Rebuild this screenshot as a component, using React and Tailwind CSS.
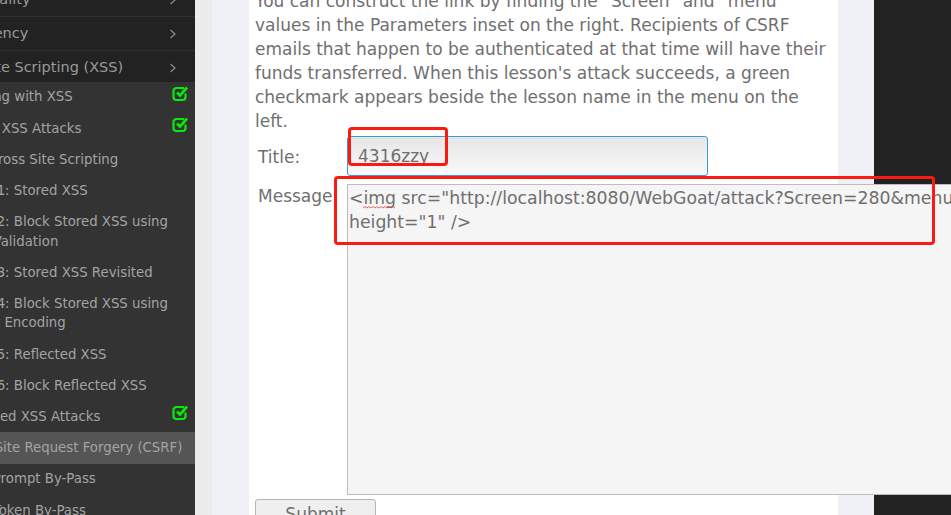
const font = { fontFamily: '"DejaVu Sans", sans-serif' };

const CheckIcon = () => (
  <svg width="17" height="17" viewBox="0 0 17 17" fill="none" className="shrink-0">
    <path d="M13.5 8.5v3.5a3 3 0 0 1-3 3H4.5a3 3 0 0 1-3-3V6a3 3 0 0 1 3-3H12" stroke="#0be80b" strokeWidth="2.2" />
    <path d="M5 7.5l3 3 7-8" stroke="#0be80b" strokeWidth="2.8" />
  </svg>
);

const Chevron = () => (
  <svg width="8" height="10" viewBox="0 0 8 10" fill="none" className="shrink-0">
    <path d="M1.5 1l4.5 4-4.5 4" stroke="#8c8c8c" strokeWidth="1.2" />
  </svg>
);

const categories = ["Code Quality", "Concurrency", "Cross-Site Scripting (XSS)"];

const lessons = [
  { text: "Phishing with XSS", done: true },
  { text: "Stored XSS Attacks", done: true },
  { text: "LAB: Cross Site Scripting" },
  { text: "Stage 1: Stored XSS" },
  { text: "Stage 2: Block Stored XSS using Input Validation" },
  { text: "Stage 3: Stored XSS Revisited" },
  { text: "Stage 4: Block Stored XSS using Output Encoding" },
  { text: "Stage 5: Reflected XSS" },
  { text: "Stage 6: Block Reflected XSS" },
  { text: "Reflected XSS Attacks", done: true },
  { text: "Cross Site Request Forgery (CSRF)", active: true },
  { text: "CSRF Prompt By-Pass" },
  { text: "CSRF Token By-Pass" },
];

const Sidebar = () => (
  <aside className="w-[195px] shrink-0 bg-[#333] overflow-hidden">
    <div className="-mt-[17.5px]">
      {categories.map((c) => (
        <div key={c} className="h-[34px] pt-[2px] bg-[#222] border-b border-[#2e2e2e] flex items-center pr-[18px] text-[14.5px] text-[#9a9a9a] whitespace-nowrap">
          <span className="-ml-[63px]">{c}</span>
          <div className="ml-auto"><Chevron /></div>
        </div>
      ))}
      <div className="relative -mt-[3px] bg-[#333]">
        {lessons.map((l) => (
          <div key={l.text} className={`relative py-[5.85px] pr-[10px] text-[13.3px] leading-[19.5px] text-[#a3a3a3] ${l.active ? "bg-[#555]" : ""}`}>
            <div className="-ml-[46px]">{l.text}</div>
            {l.done && <div className="absolute right-[6px] top-[3px]"><CheckIcon /></div>}
          </div>
        ))}
      </div>
    </div>
  </aside>
);

const LessonForm = () => (
  <main className="w-[589px] shrink-0 bg-white px-[6px] -mt-[11px]">
    <p className="text-[17px] leading-[24.1px] text-[#6f6f6f] whitespace-nowrap">
      You can construct the link by finding the "Screen" and "menu"<br />
      values in the Parameters inset on the right. Recipients of CSRF<br />
      emails that happen to be authenticated at that time will have their<br />
      funds transferred. When this lesson's attack succeeds, a green<br />
      checkmark appears beside the lesson name in the menu on the<br />
      left.
    </p>
    <div className="flex mt-[2px]">
      <div className="w-[92px] shrink-0 pl-[3px] pt-[9px] text-[17px] text-[#6f6f6f]">Title:</div>
      <div className="w-[361px] h-[40px] shrink-0 rounded-[3px] border border-[#3a9bdc] bg-gradient-to-b from-[#e6e6e6] to-[#fafafa] pl-[10px] pt-[9px] text-[17px] leading-[20px] text-[#6f6f6f]">4316zzy</div>
    </div>
    <div className="flex mt-[8px]">
      <div className="w-[92px] shrink-0 pl-[3px] text-[17px] text-[#6f6f6f]">Message:</div>
      <div className="relative w-[640px] h-[311px] shrink-0 border border-[#bdbdbd] bg-[#f5f5f5] pl-[1px] pt-[1px] text-[17.3px] leading-[24px] text-[#6f6f6f] whitespace-pre">
        {'<img src="http://localhost:8080/WebGoat/attack?Screen=280&menu=900" width="1"\nheight="1" />'}
        <svg width="33" height="3" viewBox="0 0 33 3" fill="none" className="absolute left-[15px] top-[21px]">
          <path d="M0 2l2-1.5 2 1.5 2-1.5 2 1.5 2-1.5 2 1.5 2-1.5 2 1.5 2-1.5 2 1.5 2-1.5 2 1.5 2-1.5 2 1.5 2-1.5 2 1.5" stroke="#e04040" strokeWidth="0.8" />
        </svg>
      </div>
    </div>
    <button className="block mt-[4px] w-[121px] h-[32px] rounded-[3px] border border-[#b5b5b5] bg-[#efefef] text-[17px] text-[#6f6f6f]">Submit</button>
  </main>
);

export default function App() {
  return (
    <div style={font} className="relative w-[951px] h-[515px] overflow-hidden flex bg-[#f0f1f7]">
      <Sidebar />
      <div className="w-[17px] shrink-0 bg-[#ececec]" />
      <div className="w-[37px] shrink-0" />
      <LessonForm />
      <div className="w-[36px] shrink-0" />
      <div className="flex-1 bg-[#222]" />
      {/* red annotation boxes drawn over the screenshot */}
      <div className="absolute left-[348px] top-[127px] w-[100px] h-[39px] rounded-[4px] border-[3px] border-[#fb1a10]" />
      <div className="absolute left-[334px] top-[176px] w-[601px] h-[69px] rounded-[4px] border-[3px] border-[#fb1a10]" />
    </div>
  );
}
